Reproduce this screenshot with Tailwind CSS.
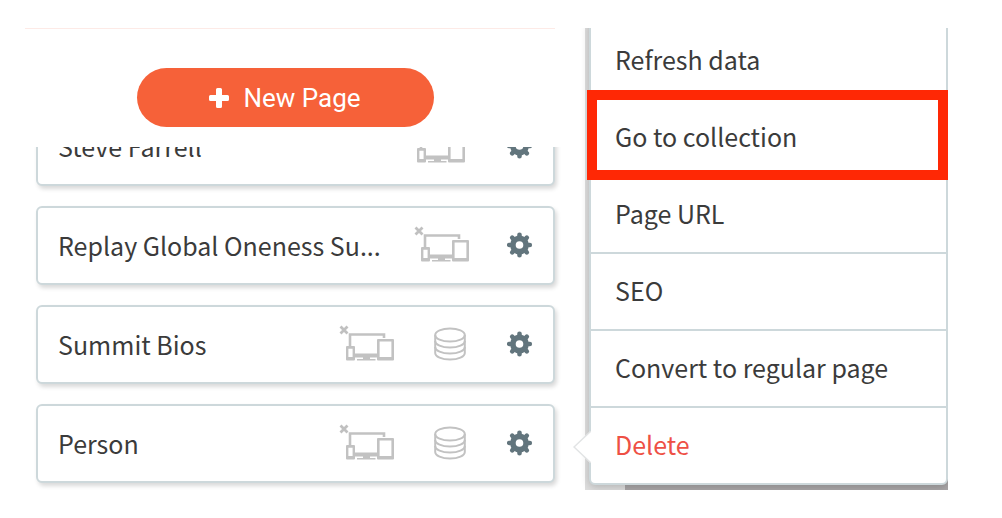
<!DOCTYPE html>
<html lang="en">
  <head>
    <meta charset="UTF-8" />
    <meta name="viewport" content="width=device-width, initial-scale=1.0" />
    <title>Pages</title>
    <script src="https://cdn.jsdelivr.net/npm/@tailwindcss/browser@4"></script>
  </head>
  <body class="bg-white text-[#3b3b3b] font-['Noto_Sans_CJK_SC','Noto_Sans',sans-serif] text-[25px] leading-9">
    <!-- shared icons -->
    <svg class="hidden">
      <symbol id="icon-devices" viewBox="0 1 55 40">
        <path d="M1.500 2.500l7 7M8.500 2.500l-7 7" fill="none" stroke="#c0c0c0" stroke-width="2.800" />
        <path d="M11 22V10.500H45V14" fill="none" stroke="#c2c2c2" stroke-width="2.600" />
        <path d="M16 29.500h22v4h-7v1.500h5.500v1.500H18V35h6v-1.500h-8z" fill="#c2c2c2" />
        <path fill-rule="evenodd" d="M8 22h7a1 1 0 0 1 1 1V35.500a1 1 0 0 1-1 1H8a1 1 0 0 1-1-1V23a1 1 0 0 1 1-1zM9.400 24.800v8.200h4.200V24.800z" fill="#c2c2c2" />
        <path fill-rule="evenodd" d="M39 15h15a1 1 0 0 1 1 1V35.500a1 1 0 0 1-1 1H39a1 1 0 0 1-1-1V16a1 1 0 0 1 1-1zM40.600 17.400v15.600h11.800V17.400z" fill="#c2c2c2" />
      </symbol>
      <symbol id="icon-database" viewBox="0 0 37 36">
        <g fill="none" stroke="#c2c2c2" stroke-width="2">
          <ellipse cx="18" cy="8" rx="14.800" ry="6.600" />
          <path d="M3.200 8v18c0 3.600 6.600 6.600 14.800 6.600s14.800-3 14.800-6.600V8" />
          <path d="M3.200 14c0 3.600 6.600 6.600 14.800 6.600s14.800-3 14.800-6.600M3.200 20c0 3.600 6.600 6.600 14.800 6.600s14.800-3 14.800-6.600" />
        </g>
      </symbol>
      <symbol id="icon-gear" viewBox="0 0 26 28">
        <circle cx="12.500" cy="13" r="6.600" fill="none" stroke="#62757d" stroke-width="5.600" />
        <g stroke="#62757d" stroke-width="4.600" stroke-linecap="round">
          <path d="M12.500 2.700v2M12.500 21.300v2M2.200 13h2M20.800 13h2" />
          <path d="M5.200 5.700l1.600 1.600M18.200 18.700l1.600 1.600M5.200 20.300l1.600-1.600M18.200 7.300l1.600-1.600" />
        </g>
      </symbol>
    </svg>

    <main class="flex pt-7 pl-[25px] pr-[54px]">
      <section class="flex-1 min-w-0">
        <header class="mr-4 border-t border-[#fdeae6] pt-[39px] pb-5 pr-[10px] flex justify-center">
          <button class="flex items-center justify-center gap-[14px] w-[297px] h-[59px] rounded-full bg-[#f66139] text-white text-[26px] font-[Roboto,sans-serif]">
            <svg class="w-5 h-5" viewBox="0 0 20 20" fill="currentColor">
              <path d="M8.500 0h3a1.500 1.500 0 0 1 1.500 1.500V7h5.500A1.500 1.500 0 0 1 20 8.500v3a1.500 1.500 0 0 1-1.500 1.500H13v5.500a1.500 1.500 0 0 1-1.500 1.500h-3A1.500 1.500 0 0 1 7 18.500V13H1.500A1.500 1.500 0 0 1 0 11.500v-3A1.500 1.500 0 0 1 1.500 7H7V1.500A1.500 1.500 0 0 1 8.500 0z" />
            </svg>
            New Page
          </button>
        </header>

        <!-- page list, scrolled under the header -->
        <div class="overflow-hidden pl-[11px] pr-4 pb-[7px]">
          <ul class="-mt-10 flex flex-col gap-5">
            <li class="flex items-center gap-[38px] h-[79px] pl-5 pr-5 border-2 border-[#cdd8db] rounded-md bg-white shadow-[2px_3px_4px_rgba(0,0,0,0.15)]">
              <a href="#" class="flex-1 min-w-0 pb-px whitespace-nowrap">Steve Farrell</a>
              <svg class="w-[55px] h-10 mr-1 shrink-0"><use href="#icon-devices" /></svg>
              <button aria-label="Page settings" class="shrink-0"><svg class="w-[26px] h-7"><use href="#icon-gear" /></svg></button>
            </li>
            <li class="flex items-center gap-[38px] h-[79px] pl-5 pr-5 border-2 border-[#cdd8db] rounded-md bg-white shadow-[2px_3px_4px_rgba(0,0,0,0.15)]">
              <a href="#" class="flex-1 min-w-0 pb-px whitespace-nowrap">Replay Global Oneness Su...</a>
              <svg class="w-[55px] h-10 shrink-0"><use href="#icon-devices" /></svg>
              <button aria-label="Page settings" class="shrink-0"><svg class="w-[26px] h-7"><use href="#icon-gear" /></svg></button>
            </li>
            <li class="flex items-center gap-[38px] h-[79px] pl-5 pr-5 border-2 border-[#cdd8db] rounded-md bg-white shadow-[2px_3px_4px_rgba(0,0,0,0.15)]">
              <a href="#" class="flex-1 min-w-0 pb-px whitespace-nowrap">Summit Bios</a>
              <svg class="w-[55px] h-10 shrink-0"><use href="#icon-devices" /></svg>
              <svg class="w-[37px] h-9 shrink-0"><use href="#icon-database" /></svg>
              <button aria-label="Page settings" class="shrink-0"><svg class="w-[26px] h-7"><use href="#icon-gear" /></svg></button>
            </li>
            <li class="flex items-center gap-[38px] h-[79px] pl-5 pr-5 border-2 border-[#cdd8db] rounded-md bg-white shadow-[2px_3px_4px_rgba(0,0,0,0.15)]">
              <a href="#" class="flex-1 min-w-0 pb-px whitespace-nowrap">Person</a>
              <svg class="w-[55px] h-10 shrink-0"><use href="#icon-devices" /></svg>
              <svg class="w-[37px] h-9 shrink-0"><use href="#icon-database" /></svg>
              <button aria-label="Page settings" class="shrink-0"><svg class="w-[26px] h-7"><use href="#icon-gear" /></svg></button>
            </li>
          </ul>
        </div>
      </section>

      <aside class="w-[377px] shrink-0 flex pl-[14px] overflow-hidden">
        <div class="flex-1 pl-1 bg-linear-to-r from-[#dedede] from-[40px] to-[#aaa7a8] to-[40px]">
          <!-- context menu of the Person page -->
          <div class="relative">
            <ul class="-mt-[9px] border-2 border-[#cdd8db] rounded-md bg-white divide-y-2 divide-[#cdd8db] shadow-[0_2px_8px_rgba(0,0,0,0.2)]">
              <li><button class="block w-full h-[77px] px-6 pb-px text-left">Refresh data</button></li>
              <li class="relative">
                <button class="block w-full h-[75px] px-6 pb-[3px] text-left">Go to collection</button>
                <span class="absolute -top-[10px] -bottom-[5px] -left-1 -right-[2px] border-[10px] border-[#ff2805]"></span>
              </li>
              <li><button class="block w-full h-[75px] px-6 pb-[3px] text-left">Page URL</button></li>
              <li><button class="block w-full h-[75px] px-6 pb-[3px] text-left">SEO</button></li>
              <li><button class="block w-full h-[75px] px-6 pb-[3px] text-left">Convert to regular page</button></li>
              <li><button class="block w-full h-[75px] px-6 pb-[3px] text-left text-[#ee5045]">Delete</button></li>
            </ul>
            <svg class="absolute -left-4 bottom-[22px] w-[18px] h-8" viewBox="0 0 18 32">
              <path d="M18 0v32L1 16z" fill="#fff" />
              <path d="M18 0L1 16l17 16" fill="none" stroke="#e2e4e5" stroke-width="1.500" />
            </svg>
          </div>
        </div>
      </aside>
    </main>
  </body>
</html>
